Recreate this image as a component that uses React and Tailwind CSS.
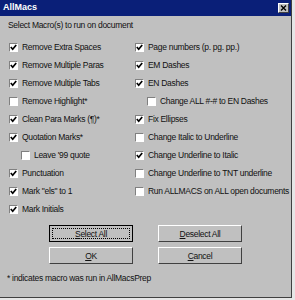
import React from "react";

const left = [
  { label: "Remove Extra Spaces", on: true },
  { label: "Remove Multiple Paras", on: true },
  { label: "Remove Multiple Tabs", on: true },
  { label: "Remove Highlight*", on: false },
  { label: "Clean Para Marks (¶)*", on: true },
  { label: "Quotation Marks*", on: true },
  { label: "Leave '99 quote", on: false, indent: true },
  { label: "Punctuation", on: true },
  { label: 'Mark "els" to 1', on: true },
  { label: "Mark Initials", on: true },
];

const right = [
  { label: "Page numbers (p. pg. pp.)", on: true },
  { label: "EM Dashes", on: true },
  { label: "EN Dashes", on: true },
  { label: "Change ALL #-# to EN Dashes", on: false, indent: true },
  { label: "Fix Ellipses", on: true },
  { label: "Change Italic to Underline", on: false },
  { label: "Change Underline to Italic", on: true },
  { label: "Change Underline to TNT underline", on: false },
  { label: "Run ALLMACS on ALL open documents", on: false },
];

const CheckBox = ({ on }) => (
  <span className="w-[9px] h-[9px] shrink-0 bg-white border-t border-l border-t-[#808080] border-l-[#808080] border-b border-r border-b-white border-r-white flex items-center justify-center">
    {on && (
      <svg width="7" height="7" viewBox="0 0 7 7">
        <path d="M0.8 3 L2.7 5.2 L6.2 1" stroke="#000" strokeWidth="1.7" fill="none" />
      </svg>
    )}
  </span>
);

const Row = ({ label, on, indent }) => (
  <div className={`h-[18px] flex items-center gap-[4px] ${indent ? "pl-[12px]" : ""}`}>
    <CheckBox on={on} />
    <span className="whitespace-nowrap">{label}</span>
  </div>
);

const Button = ({ children, focus }) => (
  <button
    className={`w-[84px] h-[17px] bg-[#c0c0c0] flex items-stretch ${
      focus
        ? "border border-black"
        : "border-t border-l border-t-white border-l-white border-b border-r border-b-[#404040] border-r-[#404040]"
    }`}
  >
    <span
      className={`flex-1 flex items-center justify-center leading-[10px] ${
        focus ? "m-[2px] border border-dotted border-black" : ""
      }`}
    >
      <span>{children}</span>
    </span>
  </button>
);

export default function App() {
  return (
    <div className="w-[295px] h-[300px] bg-[#e6e6e6]" style={{ fontFamily: '"Liberation Sans", Arial, sans-serif' }}>
      <div className="w-[292px] h-[298px] bg-[#c0c0c0] border-r border-b border-r-[#404040] border-b-[#404040] flex flex-col text-[8.5px] tracking-[-0.3px] text-[#111]">
        <div className="h-[16px] bg-[#0a1f78] flex items-center justify-between pl-[3px] pr-[2px]">
          <span className="text-white font-bold text-[9px] tracking-normal">AllMacs</span>
          <span className="w-[11px] h-[10px] bg-[#c0c0c0] border-t border-l border-t-white border-l-white border-b border-r border-b-[#404040] border-r-[#404040] flex items-center justify-center">
            <svg width="7" height="6" viewBox="0 0 7 6">
              <path d="M1 0.5 L6 5.5 M6 0.5 L1 5.5" stroke="#000" strokeWidth="1.4" />
            </svg>
          </span>
        </div>
        <div className="px-[8px]">
          <div className="mt-[3px] h-[12px] flex items-center">Select Macro(s) to run on document</div>
          <div className="mt-[7px] flex">
            <div className="w-[127px] shrink-0 pl-[1px]">
              {left.map((r) => (
                <Row key={r.label} {...r} />
              ))}
            </div>
            <div>
              {right.map((r) => (
                <Row key={r.label} {...r} />
              ))}
            </div>
          </div>
          <div className="mt-[7px] pl-[41px] flex flex-col gap-[5px]">
            <div className="flex gap-[25px]">
              <Button focus>
                <u>S</u>elect All
              </Button>
              <Button>
                <u>D</u>eselect All
              </Button>
            </div>
            <div className="flex gap-[25px]">
              <Button>
                <u>O</u>K
              </Button>
              <Button>
                <u>C</u>ancel
              </Button>
            </div>
          </div>
          <div className="mt-[8px] h-[12px] flex items-center -ml-[1px]">* indicates macro was run in AllMacsPrep</div>
        </div>
      </div>
    </div>
  );
}
